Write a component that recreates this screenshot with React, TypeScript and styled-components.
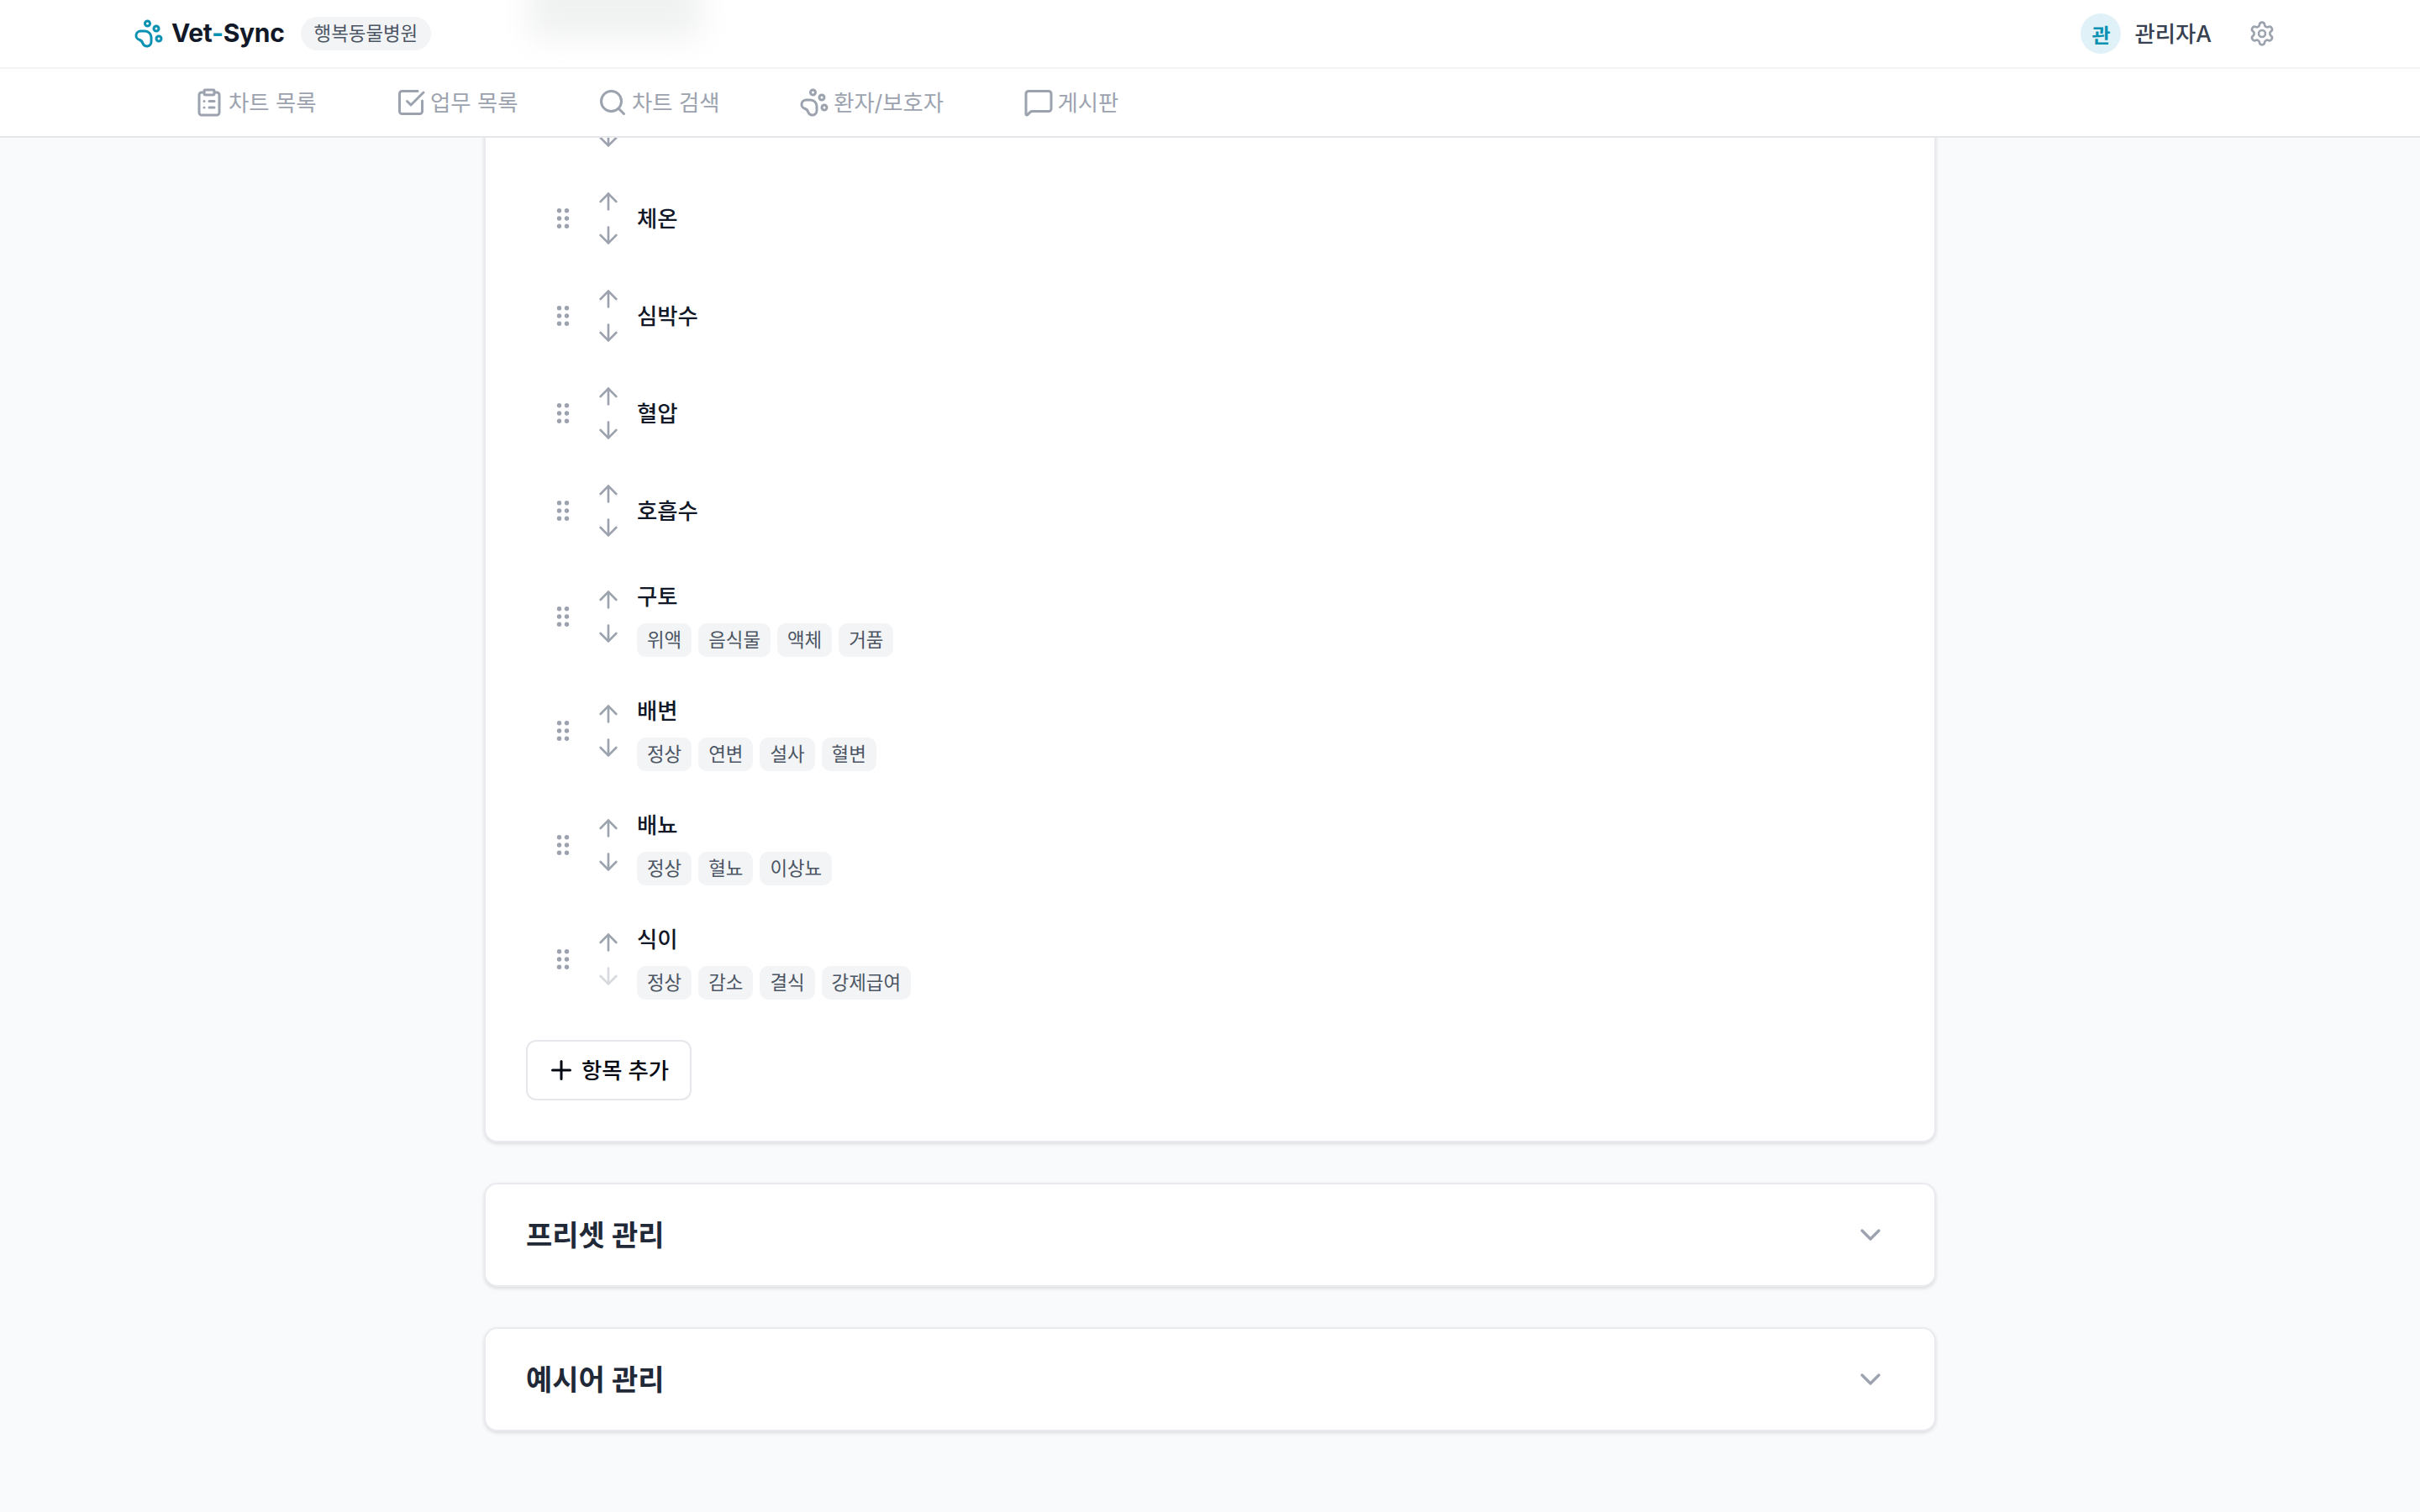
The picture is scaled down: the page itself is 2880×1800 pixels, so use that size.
import React from 'react';
import styled, { createGlobalStyle } from 'styled-components';
import {
  ArrowDown,
  ArrowUp,
  ChevronDown,
  ClipboardList,
  MessageSquare,
  PawPrint,
  Plus,
  Search,
  Settings,
  SquareCheckBig,
} from 'lucide-react';

const GlobalStyle = createGlobalStyle`
  * {
    box-sizing: border-box;
  }
  html, body {
    margin: 0;
    height: 100%;
    background: #f9fafb;
    font-family: Inter, "Noto Sans CJK KR", sans-serif;
  }
`;

const Page = styled.div`
  display: flex;
  flex-direction: column;
  height: 1800px;
  overflow: hidden;
`;

const Header = styled.header`
  position: relative;
  display: flex;
  flex: none;
  align-items: center;
  justify-content: space-between;
  height: 82px;
  padding: 0 172px 0 159px;
  overflow: hidden;
  background: #fff;
  border-bottom: 2px solid #f3f4f6;
`;

const BlurGhost = styled.div`
  position: absolute;
  top: -30px;
  left: 630px;
  width: 205px;
  height: 74px;
  background: #f0f1f1;
  filter: blur(18px);
`;

const Brand = styled.div`
  position: relative;
  display: flex;
  align-items: center;
`;

const Logo = styled.div`
  display: flex;
  align-items: center;
  gap: 9px;
  color: #0891b2;
`;

const LogoText = styled.span`
  margin-bottom: 3px;
  font-size: 30px;
  font-weight: 700;
  letter-spacing: -0.3px;
  color: #111827;
`;

const LogoDash = styled.span`
  color: #0891b2;
`;

const ClinicBadge = styled.span`
  margin-left: 19px;
  padding: 0 16px;
  font-size: 22.4px;
  line-height: 40px;
  color: #4b5563;
  background: #f3f4f6;
  border-radius: 20px;
`;

const UserArea = styled.div`
  position: relative;
  display: flex;
  align-items: center;
`;

const Avatar = styled.div`
  display: flex;
  align-items: center;
  justify-content: center;
  width: 48px;
  height: 48px;
  font-size: 24px;
  font-weight: 600;
  color: #0891b2;
  background: #e0f2f7;
  border-radius: 50%;
`;

const UserName = styled.span`
  margin: 0 0 3px 16px;
  font-size: 26.4px;
  font-weight: 500;
  color: #374151;
`;

const GearButton = styled.span`
  display: flex;
  margin-left: 44px;
  color: #9ca3af;
`;

const Nav = styled.nav`
  display: flex;
  flex: none;
  align-items: center;
  gap: 94.5px;
  height: 82px;
  padding-left: 231px;
  background: #fff;
  border-bottom: 2px solid #e5e7eb;
`;

const NavItem = styled.a`
  display: flex;
  align-items: center;
  gap: 5px;
  font-size: 26.4px;
  color: #9ca3af;
`;

const NavLabel = styled.span`
  margin-bottom: 4px;
`;

const Main = styled.main`
  flex: 1;
  min-height: 0;
  overflow: hidden;
`;

const Column = styled.div`
  display: flex;
  flex-direction: column;
  gap: 48px;
  width: 1728px;
  margin: -80px auto 0;
`;

const Card = styled.section`
  background: #fff;
  border: 2px solid #eaebee;
  border-radius: 16px;
  box-shadow: 0 2px 4px rgba(0, 0, 0, 0.12);
`;

const FieldsBody = styled.div`
  padding: 0 48px 48px;
`;

const FieldList = styled.div`
  display: flex;
  flex-direction: column;
  margin-bottom: 28px;
`;

const FieldRow = styled.div`
  display: flex;
  align-items: center;
  gap: 16px;
  padding: 20px 24px;
`;

const GripIcon = styled.svg`
  flex: none;
  width: 40px;
  height: 40px;
  fill: #9ca3af;
`;

const MoveButtons = styled.div`
  display: flex;
  flex: none;
  flex-direction: column;
  gap: 4px;
`;

const MoveButton = styled.span<{ $disabled?: boolean }>`
  display: flex;
  align-items: center;
  justify-content: center;
  width: 36px;
  height: 36px;
  color: #9ca3af;
  opacity: ${(p) => (p.$disabled ? 0.4 : 1)};
`;

const FieldInfo = styled.div`
  display: flex;
  flex-direction: column;
  gap: 8px;
`;

const FieldName = styled.span`
  font-size: 26.4px;
  font-weight: 500;
  line-height: 48px;
  color: #111827;
`;

const TagRow = styled.div`
  display: flex;
  gap: 8px;
`;

const Tag = styled.span`
  padding: 4px 12px;
  font-size: 22.4px;
  line-height: 32px;
  color: #4b5563;
  background: #f3f4f6;
  border-radius: 10px;
`;

const AddButton = styled.button`
  display: flex;
  align-items: center;
  gap: 6px;
  height: 72px;
  padding: 0 25px 0 22px;
  font-family: inherit;
  font-size: 26.4px;
  font-weight: 500;
  color: #030712;
  background: #fff;
  border: 2px solid #e5e7eb;
  border-radius: 12px;
`;

const AddLabel = styled.span`
  margin-bottom: 3px;
`;

const CollapsedHeader = styled.div`
  display: flex;
  align-items: center;
  justify-content: space-between;
  height: 120px;
  padding: 0 56px 0 48px;
`;

const CollapsedTitle = styled.h2`
  margin: 0 0 3px;
  font-size: 34px;
  font-weight: 700;
  color: #1f2937;
`;

const Chevron = styled.span`
  display: flex;
  color: #9ca3af;
`;

type Field = { id: string; name?: string; tags?: string[]; lastDisabled?: boolean };

const NAV_ITEMS = [
  { label: '차트 목록', Icon: ClipboardList },
  { label: '업무 목록', Icon: SquareCheckBig },
  { label: '차트 검색', Icon: Search },
  { label: '환자/보호자', Icon: PawPrint },
  { label: '게시판', Icon: MessageSquare },
];

// the first row has scrolled under the nav, only its down arrow still shows
const FIELDS: Field[] = [
  { id: 'hidden' },
  { id: 'temp', name: '체온' },
  { id: 'pulse', name: '심박수' },
  { id: 'pressure', name: '혈압' },
  { id: 'breath', name: '호흡수' },
  { id: 'vomit', name: '구토', tags: ['위액', '음식물', '액체', '거품'] },
  { id: 'stool', name: '배변', tags: ['정상', '연변', '설사', '혈변'] },
  { id: 'urine', name: '배뇨', tags: ['정상', '혈뇨', '이상뇨'] },
  { id: 'food', name: '식이', tags: ['정상', '감소', '결식', '강제급여'], lastDisabled: true },
];

const Grip = () => (
  <GripIcon viewBox="0 0 40 40">
    {[10.7, 20, 29.3].map((y) => (
      <React.Fragment key={y}>
        <circle cx="15.5" cy={y} r="2.7" />
        <circle cx="24.5" cy={y} r="2.7" />
      </React.Fragment>
    ))}
  </GripIcon>
);

const App: React.FC = () => {
  return (
    <Page>
      <GlobalStyle />
      <Header>
        <BlurGhost />
        <Brand>
          <Logo>
            <PawPrint size={36} strokeWidth={2} />
            <LogoText>
              Vet<LogoDash>-</LogoDash>Sync
            </LogoText>
          </Logo>
          <ClinicBadge>행복동물병원</ClinicBadge>
        </Brand>
        <UserArea>
          <Avatar>관</Avatar>
          <UserName>관리자A</UserName>
          <GearButton>
            <Settings size={32} />
          </GearButton>
        </UserArea>
      </Header>
      <Nav>
        {NAV_ITEMS.map(({ label, Icon }) => (
          <NavItem key={label}>
            <Icon size={36} />
            <NavLabel>{label}</NavLabel>
          </NavItem>
        ))}
      </Nav>
      <Main>
        <Column>
          <Card>
            <FieldsBody>
              <FieldList>
                {FIELDS.map((field) => (
                  <FieldRow key={field.id}>
                    <Grip />
                    <MoveButtons>
                      <MoveButton>
                        <ArrowUp size={32} strokeWidth={2} />
                      </MoveButton>
                      <MoveButton $disabled={field.lastDisabled}>
                        <ArrowDown size={32} strokeWidth={2} />
                      </MoveButton>
                    </MoveButtons>
                    <FieldInfo>
                      {field.name && <FieldName>{field.name}</FieldName>}
                      {field.tags && (
                        <TagRow>
                          {field.tags.map((tag) => (
                            <Tag key={tag}>{tag}</Tag>
                          ))}
                        </TagRow>
                      )}
                    </FieldInfo>
                  </FieldRow>
                ))}
              </FieldList>
              <AddButton>
                <Plus size={36} />
                <AddLabel>항목 추가</AddLabel>
              </AddButton>
            </FieldsBody>
          </Card>
          <Card>
            <CollapsedHeader>
              <CollapsedTitle>프리셋 관리</CollapsedTitle>
              <Chevron>
                <ChevronDown size={40} />
              </Chevron>
            </CollapsedHeader>
          </Card>
          <Card>
            <CollapsedHeader>
              <CollapsedTitle>예시어 관리</CollapsedTitle>
              <Chevron>
                <ChevronDown size={40} />
              </Chevron>
            </CollapsedHeader>
          </Card>
        </Column>
      </Main>
    </Page>
  );
};

export default App;
